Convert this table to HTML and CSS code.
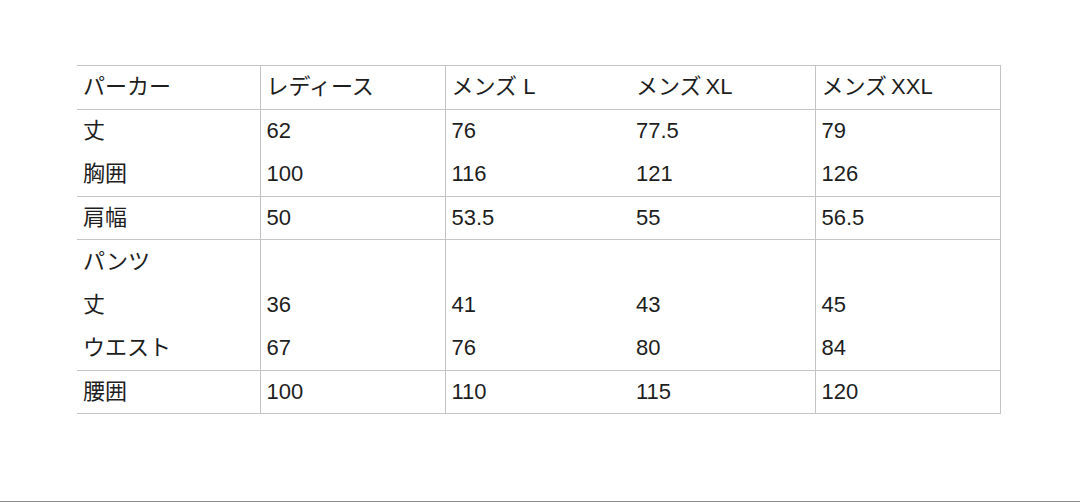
FILE: index.html
```html
<!DOCTYPE html>
<html lang="ja">
<head>
<meta charset="utf-8">
<link rel="stylesheet" href="styles.css">
</head>
<body>
<div class="page">
  <table class="size-table">
    <colgroup>
      <col class="c1"><col class="c2"><col class="c3"><col class="c4"><col class="c5">
    </colgroup>
    <tr class="line">
      <td class="vr">パーカー</td><td class="vr">レディース</td><td>メンズ L</td><td class="vr">メンズ<span class="lat">XL</span></td><td class="vr">メンズ<span class="lat">XXL</span></td>
    </tr>
    <tr>
      <td class="vr">丈</td><td class="vr">62</td><td>76</td><td class="vr">77.5</td><td class="vr">79</td>
    </tr>
    <tr class="line">
      <td class="vr">胸囲</td><td class="vr">100</td><td>116</td><td class="vr">121</td><td class="vr">126</td>
    </tr>
    <tr class="line">
      <td class="vr">肩幅</td><td class="vr">50</td><td>53.5</td><td class="vr">55</td><td class="vr">56.5</td>
    </tr>
    <tr>
      <td class="vr">パンツ</td><td class="vr"></td><td></td><td class="vr"></td><td class="vr"></td>
    </tr>
    <tr>
      <td class="vr">丈</td><td class="vr">36</td><td>41</td><td class="vr">43</td><td class="vr">45</td>
    </tr>
    <tr class="line">
      <td class="vr">ウエスト</td><td class="vr">67</td><td>76</td><td class="vr">80</td><td class="vr">84</td>
    </tr>
    <tr class="line">
      <td class="vr">腰囲</td><td class="vr">100</td><td>110</td><td class="vr">115</td><td class="vr">120</td>
    </tr>
  </table>
</div>
</body>
</html>
```

FILE: styles.css
```css
html, body {
  margin: 0;
  padding: 0;
  background: #ffffff;
}

.page {
  box-sizing: border-box;
  width: 1080px;
  height: 502px;
  padding: 65px 0 0 77px;
  border-bottom: 1px solid #8a8a8a;
  font-family: "Liberation Sans", "Noto Sans CJK JP", sans-serif;
  color: #1e1e1e;
}

.size-table {
  border-collapse: collapse;
  table-layout: fixed;
  width: 923px;
  border-top: 1px solid #c4c4c4;
}

.c1 { width: 183px; }
.c2, .c3, .c4, .c5 { width: 185px; }

.size-table td {
  height: 43.5px;
  padding: 0 0 0 6px;
  font-size: 22px;
  line-height: 24px;
  vertical-align: middle;
  white-space: nowrap;
  box-sizing: border-box;
}

.size-table td.vr {
  border-right: 1px solid #c4c4c4;
}

.size-table tr.line td {
  border-bottom: 1px solid #c4c4c4;
}

.lat {
  margin-left: 4px;
}
```
